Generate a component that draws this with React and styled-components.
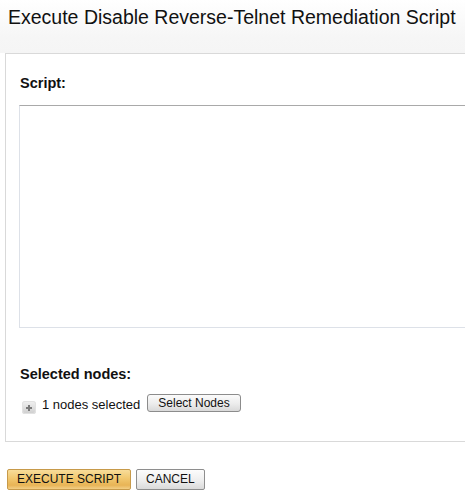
import React from "react";
import styled, { createGlobalStyle } from "styled-components";

const Global = createGlobalStyle`
  html, body { margin: 0; padding: 0; overflow: hidden; background: #ffffff; }
  body { font-family: "Liberation Sans", Arial, sans-serif; color: #111; }
`;

const Page = styled.div`
  width: 465px;
  height: 493px;
  overflow: hidden;
  display: flex;
  flex-direction: column;
`;

const Header = styled.div`
  height: 53px;
  box-sizing: border-box;
  padding: 6px 0 0 8px;
  background: linear-gradient(#ffffff 0%, #f6f6f6 70%, #f5f5f5 100%);
  white-space: nowrap;
`;

const Title = styled.h1`
  margin: 0;
  font-size: 19.5px;
  line-height: 23px;
  font-weight: normal;
  color: #111;
`;

const Panel = styled.div`
  margin-left: 5px;
  width: 540px;
  flex: none;
  box-sizing: border-box;
  border: 1px solid #d9d9d9;
  background: #fff;
  padding: 21px 0 28px 14px;
`;

const Label = styled.div`
  font-size: 14.5px;
  line-height: 16px;
  font-weight: bold;
  color: #111;
  margin-top: ${(p) => p.$top || 0}px;
`;

const ScriptArea = styled.div`
  margin-top: 14px;
  margin-left: -1px;
  height: 223px;
  box-sizing: border-box;
  border: 1px solid #dde1e8;
  border-top-color: #a9a9a9;
  background: #fff;
`;

const NodesRow = styled.div`
  display: flex;
  align-items: flex-start;
  margin-top: 12px;
  height: 19px;
`;

const PlusIcon = styled.span`
  width: 14px;
  height: 13px;
  margin-top: 7px;
  margin-left: 2px;
  border-radius: 3px;
  background: linear-gradient(#f2f2f2, #cdcdcd);
  box-shadow: inset 0 0 0 1px #e2e2e2;
  display: flex;
  align-items: center;
  justify-content: center;
`;

const NodesText = styled.span`
  font-size: 13px;
  line-height: 16px;
  margin-top: 3px;
  margin-left: 6px;
  color: #111;
`;

const SmallButton = styled.button`
  margin-left: 7px;
  height: 18px;
  padding: 0 10px;
  box-sizing: border-box;
  font-family: "Liberation Sans", Arial, sans-serif;
  font-size: 12px;
  line-height: 15px;
  color: #111;
  border: 1px solid #8c8c8c;
  border-radius: 3px;
  background: linear-gradient(#fbfbfb 0%, #ececec 55%, #d9d9d9 100%);
  cursor: pointer;
`;

const Footer = styled.div`
  display: flex;
  gap: 5px;
  padding: 27px 0 0 7px;
`;

const ActionButton = styled.button`
  height: 21px;
  padding: 0 9px;
  box-sizing: border-box;
  font-family: "Liberation Sans", Arial, sans-serif;
  font-size: 12px;
  line-height: 15px;
  color: #111;
  border: 1px solid ${(p) => (p.$primary ? "#c79a4a" : "#8e8e8e")};
  border-radius: 2px;
  background: ${(p) =>
    p.$primary
      ? "linear-gradient(#f8dd9a 0%, #f1c76e 45%, #e8b456 80%, #f3cf86 100%)"
      : "linear-gradient(#fcfcfc 0%, #eeeeee 55%, #dadada 100%)"};
  cursor: pointer;
`;

function Plus() {
  return (
    <svg width="8" height="8" viewBox="0 0 8 8">
      <path d="M4 1v6M1 4h6" stroke="#7a7a7a" strokeWidth="2" />
    </svg>
  );
}

export default function App() {
  return (
    <Page>
      <Global />
      <Header>
        <Title>Execute Disable Reverse-Telnet Remediation Script</Title>
      </Header>
      <Panel>
        <Label>Script:</Label>
        <ScriptArea />
        <Label $top={38}>Selected nodes:</Label>
        <NodesRow>
          <PlusIcon>
            <Plus />
          </PlusIcon>
          <NodesText>1 nodes selected</NodesText>
          <SmallButton>Select Nodes</SmallButton>
        </NodesRow>
      </Panel>
      <Footer>
        <ActionButton $primary>EXECUTE SCRIPT</ActionButton>
        <ActionButton>CANCEL</ActionButton>
      </Footer>
    </Page>
  );
}
